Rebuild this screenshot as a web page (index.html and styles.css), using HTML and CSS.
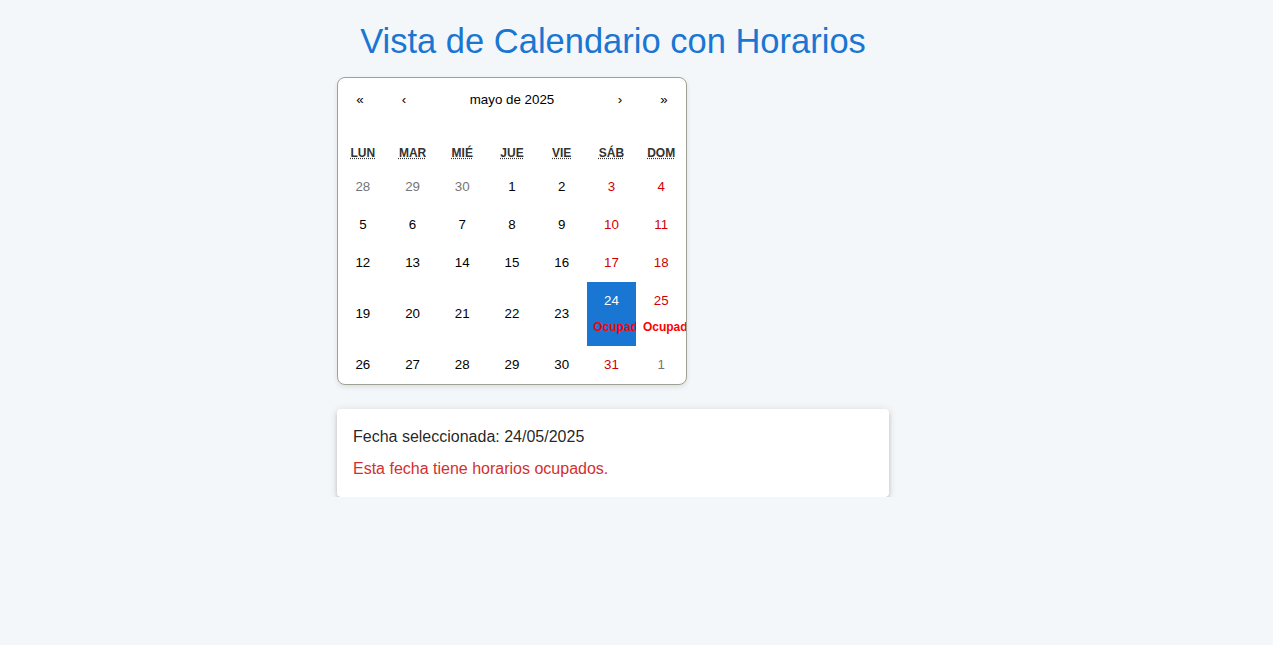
FILE: index.html
```html
<!DOCTYPE html>
<html lang="es">
<head>
<meta charset="utf-8">
<title>Vista de Calendario con Horarios</title>
<link rel="stylesheet" href="styles.css">
</head>
<body>
<main class="page">
  <h1 class="title">Vista de Calendario con Horarios</h1>
  <div class="calendar">
    <div class="nav">
      <button class="nav-btn">«</button>
      <button class="nav-btn">‹</button>
      <button class="nav-label">mayo de 2025</button>
      <button class="nav-btn">›</button>
      <button class="nav-btn">»</button>
    </div>
    <div class="weekdays">
      <div class="wd"><abbr title="lunes">LUN</abbr></div>
      <div class="wd"><abbr title="martes">MAR</abbr></div>
      <div class="wd"><abbr title="miércoles">MIÉ</abbr></div>
      <div class="wd"><abbr title="jueves">JUE</abbr></div>
      <div class="wd"><abbr title="viernes">VIE</abbr></div>
      <div class="wd"><abbr title="sábado">SÁB</abbr></div>
      <div class="wd"><abbr title="domingo">DOM</abbr></div>
    </div>
    <div class="days">
      <button class="tile other">28</button>
      <button class="tile other">29</button>
      <button class="tile other">30</button>
      <button class="tile">1</button>
      <button class="tile">2</button>
      <button class="tile weekend">3</button>
      <button class="tile weekend">4</button>

      <button class="tile">5</button>
      <button class="tile">6</button>
      <button class="tile">7</button>
      <button class="tile">8</button>
      <button class="tile">9</button>
      <button class="tile weekend">10</button>
      <button class="tile weekend">11</button>

      <button class="tile">12</button>
      <button class="tile">13</button>
      <button class="tile">14</button>
      <button class="tile">15</button>
      <button class="tile">16</button>
      <button class="tile weekend">17</button>
      <button class="tile weekend">18</button>

      <button class="tile">19</button>
      <button class="tile">20</button>
      <button class="tile">21</button>
      <button class="tile">22</button>
      <button class="tile">23</button>
      <button class="tile weekend active"><span class="num">24</span><span class="busy">Ocupado</span></button>
      <button class="tile weekend"><span class="num">25</span><span class="busy">Ocupado</span></button>

      <button class="tile">26</button>
      <button class="tile">27</button>
      <button class="tile">28</button>
      <button class="tile">29</button>
      <button class="tile">30</button>
      <button class="tile weekend">31</button>
      <button class="tile other">1</button>
    </div>
  </div>
  <section class="card">
    <p class="selected">Fecha seleccionada: 24/05/2025</p>
    <p class="warning">Esta fecha tiene horarios ocupados.</p>
  </section>
</main>
</body>
</html>
```

FILE: styles.css
```css
html, body {
  margin: 0;
  padding: 0;
  background: #f4f7fa;
}

body {
  font-family: "Liberation Sans", Arial, sans-serif;
}

.page {
  width: 552px;
  margin-left: 337px;
  padding-top: 21px;
  display: flex;
  flex-direction: column;
  align-items: flex-start;
}

.title {
  align-self: stretch;
  text-align: center;
  margin: 0 0 16px;
  font-size: 34.5px;
  font-weight: 400;
  line-height: 40px;
  color: #1976d2;
}

.calendar {
  width: 350px;
  box-sizing: border-box;
  background: #fff;
  border: 1px solid #a0a096;
  border-radius: 8px;
  box-shadow: 0 2px 5px rgba(0, 0, 0, 0.1);
  font-family: "Liberation Sans", Arial, sans-serif;
  line-height: 18px;
  overflow: hidden;
}

.nav {
  display: flex;
  height: 44px;
  margin-bottom: 16px;
}

.nav button {
  font-family: inherit;
  font-size: 13.333px;
  line-height: inherit;
  background: none;
  border: 0;
  padding: 0;
  margin: 0;
  color: #000;
}

.nav-btn {
  min-width: 44px;
}

.nav-label {
  flex-grow: 1;
}

.weekdays {
  display: grid;
  grid-template-columns: repeat(7, 1fr);
  text-align: center;
  font-weight: bold;
  font-size: 12px;
  color: #333;
}

.wd {
  padding: 6px;
}

.wd abbr {
  text-decoration: underline dotted;
}

.days {
  display: grid;
  grid-template-columns: repeat(7, minmax(0, 1fr));
}

.tile {
  display: flex;
  flex-direction: column;
  align-items: center;
  padding: 10px 6.6667px;
  border: 0;
  margin: 0;
  background: none;
  font-family: inherit;
  font-size: 13.333px;
  line-height: 18px;
  color: #000;
  overflow: hidden;
  justify-content: center;
  min-width: 0;
}

.tile .num,
.tile .busy {
  display: block;
}

.tile .busy {
  margin-top: 8px;
  font-size: 12px;
  font-weight: bold;
  color: #f00;
  white-space: nowrap;
  align-self: flex-start;
}

.tile.weekend {
  color: #d10000;
}

.tile.other {
  color: #757575;
}

.tile.active {
  background: #1976d2;
  color: #fff;
}

.card {
  align-self: stretch;
  margin-top: 24px;
  background: #fff;
  border-radius: 4px;
  padding: 16px;
  box-shadow: 0 3px 3px -2px rgba(0, 0, 0, 0.2), 0 3px 4px 0 rgba(0, 0, 0, 0.14), 0 1px 8px 0 rgba(0, 0, 0, 0.12);
}

.card p {
  margin: 0;
  font-size: 16px;
  line-height: 24px;
}

.selected {
  color: rgba(0, 0, 0, 0.87);
}

.warning {
  margin-top: 8px !important;
  color: #d32f2f;
}
```
